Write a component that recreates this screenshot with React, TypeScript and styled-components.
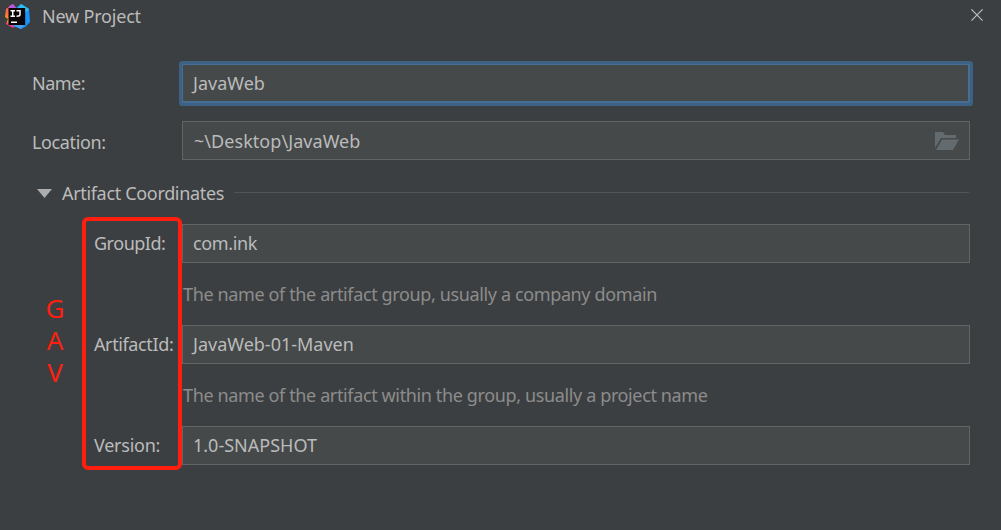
import React from "react";
import styled, { createGlobalStyle } from "styled-components";

const GlobalStyle = createGlobalStyle`
  body { margin: 0; background: #3c3f41; overflow: hidden; }
  * { box-sizing: border-box; }
`;

const Dialog = styled.main`
  position: relative;
  width: 1001px;
  height: 530px;
  background: #3c3f41;
  color: #bbbbbb;
  font: 18px/24px "Noto Sans", "Open Sans", sans-serif;
  white-space: nowrap;
`;

const TitleBar = styled.header`
  display: flex;
  align-items: center;
  height: 34px;
  padding: 0 18px 0 5px;
`;

const Text = styled.span<{ $spacing?: number; $inset?: number }>`
  padding-left: ${(p) => p.$inset ?? 0}px;
  letter-spacing: ${(p) => p.$spacing ?? 0}px;
`;

const Title = styled.h1`
  flex: 1;
  margin: 0 0 2px 12px;
  font-size: 18px;
  font-weight: 400;
  letter-spacing: -0.2px;
`;

const CloseButton = styled.button`
  display: flex;
  padding: 0;
  margin-bottom: 4px;
  border: 0;
  background: none;
`;

const Form = styled.form`
  display: flex;
  flex-direction: column;
  padding: 30px 31px 0 32px;
`;

const Row = styled.div<{ $indent?: number; $gap?: number }>`
  display: flex;
  align-items: center;
  height: 39px;
  padding-left: ${(p) => p.$indent ?? 0}px;
  margin-bottom: ${(p) => p.$gap ?? 0}px;
`;

const Label = styled.label<{ $width: number; $low?: boolean; $spacing?: number }>`
  width: ${(p) => p.$width}px;
  flex: none;
  padding: ${(p) => (p.$low ? "2px 0 0" : "0 0 2px")};
  letter-spacing: ${(p) => p.$spacing ?? -0.38}px;
`;

const Field = styled.div<{ $focused?: boolean; $lift?: number }>`
  display: flex;
  flex: 1;
  align-items: center;
  justify-content: space-between;
  height: 39px;
  padding: 0 10px ${(p) => p.$lift ?? 2}px 10px;
  border: 1px solid ${(p) => (p.$focused ? "#466d94" : "#646464")};
  background: #45494a;
  border-radius: ${(p) => (p.$focused ? 1 : 0)}px;
  box-shadow: ${(p) => (p.$focused ? "inset -1px -1px 0 #466d94, 0 0 0 3px #3d6185" : "none")};
`;

const Section = styled.div`
  display: flex;
  align-items: center;
  height: 24px;
  margin-bottom: 19px;
  padding: 0 1px 0 5px;
`;

const SectionTitle = styled.span`
  width: 172px;
  margin-left: 10px;
  letter-spacing: -0.33px;
`;

const Rule = styled.span`
  flex: 1;
  height: 1px;
  margin-bottom: 2px;
  background: #515355;
`;

const Hint = styled.p`
  height: 62px;
  margin: 0;
  padding: 19px 0 0 151px;
  color: #8c8c8c;
  letter-spacing: -0.37px;
`;

const Highlight = styled.div`
  position: absolute;
  left: 82px;
  top: 217px;
  width: 100px;
  height: 253px;
  border: 4px solid #ff1f10;
  border-radius: 6px;
`;

const Annotation = styled.div`
  position: absolute;
  left: 43px;
  top: 292px;
  width: 24px;
  display: flex;
  flex-direction: column;
  align-items: center;
  color: #ff1f10;
  font-size: 26px;
  line-height: 32px;
`;

const Logo = () => (
  <svg width="25" height="26" viewBox="0 0 25 26">
    <defs>
      <linearGradient id="warm" x1="0" y1="0" x2="0" y2="1">
        <stop offset="0" stopColor="#ff4f7d" />
        <stop offset=".35" stopColor="#fb6b48" />
        <stop offset=".7" stopColor="#fca024" />
        <stop offset=".85" stopColor="#f93b7b" />
        <stop offset="1" stopColor="#f12c91" />
      </linearGradient>
    </defs>
    <path d="M8 0L12 5L11 22L8 24L1 20L3 15L0 13L1 5Z" fill="url(#warm)" />
    <path d="M8 0L12 5L6 5L4 2Z" fill="#b457e0" />
    <path d="M11 4L16 0L24 5L25 18L20 23L16 25L8 22Z" fill="#1695ff" />
    <path d="M16 0L24 5L20 9L13 4Z" fill="#2cc0ee" />
    <path d="M8 21H19L16 25Z" fill="#4aa0f0" />
    <path d="M3.5 4H20.2V21H3.5Z" fill="#0b0508" />
    <path d="M5.5 6.8H10M7.75 6.8V12.3M5.5 12.3H10M11.5 6.8H15V10.8Q15 12.3 11.5 12.3M6 18.3H12" fill="none" stroke="#fff" strokeWidth="1.5" />
  </svg>
);

const CloseIcon = () => (
  <svg width="12" height="12" viewBox="0 0 12 12">
    <path d="M.4 .4L11.6 11.6M11.6 .4L.4 11.6" stroke="#bcbdbe" strokeWidth="1.2" />
  </svg>
);

const FolderIcon = () => (
  <svg width="24" height="18" viewBox="0 0 24 18">
    <path d="M0 0H8L10 3H21V6H6L0 16Z" fill="#636b6f" />
    <path d="M7 7.5H24L18 18H1Z" fill="#636b6f" />
  </svg>
);

const ArrowIcon = () => (
  <svg width="15" height="9" viewBox="0 0 15 9">
    <path d="M0 0H15L7.5 9Z" fill="#adadad" />
  </svg>
);

export default function App() {
  return (
    <>
      <GlobalStyle />
      <Dialog>
        <TitleBar>
          <Logo />
          <Title>New Project</Title>
          <CloseButton aria-label="Close"><CloseIcon /></CloseButton>
        </TitleBar>
        <Form>
          <Row $gap={18}>
            <Label $width={150} $spacing={-0.5}>Name:</Label>
            <Field $focused><Text>JavaWeb</Text></Field>
          </Row>
          <Row $gap={21}>
            <Label $width={150} $low>Location:</Label>
            <Field $lift={0}><Text $inset={1} $spacing={0.05}>~\Desktop\JavaWeb</Text><FolderIcon /></Field>
          </Row>
          <Section>
            <ArrowIcon />
            <SectionTitle>Artifact Coordinates</SectionTitle>
            <Rule />
          </Section>
          <Row $indent={62}>
            <Label $width={88} $spacing={-0.48}>GroupId:</Label>
            <Field><Text $spacing={-0.35}>com.ink</Text></Field>
          </Row>
          <Hint>The name of the artifact group, usually a company domain</Hint>
          <Row $indent={62}>
            <Label $width={88}>ArtifactId:</Label>
            <Field><Text>JavaWeb-01-Maven</Text></Field>
          </Row>
          <Hint>The name of the artifact within the group, usually a project name</Hint>
          <Row $indent={62}>
            <Label $width={88} $spacing={-0.25}>Version:</Label>
            <Field><Text>1.0-SNAPSHOT</Text></Field>
          </Row>
        </Form>
        <Highlight />
        <Annotation><span>G</span><span>A</span><span>V</span></Annotation>
      </Dialog>
    </>
  );
}
